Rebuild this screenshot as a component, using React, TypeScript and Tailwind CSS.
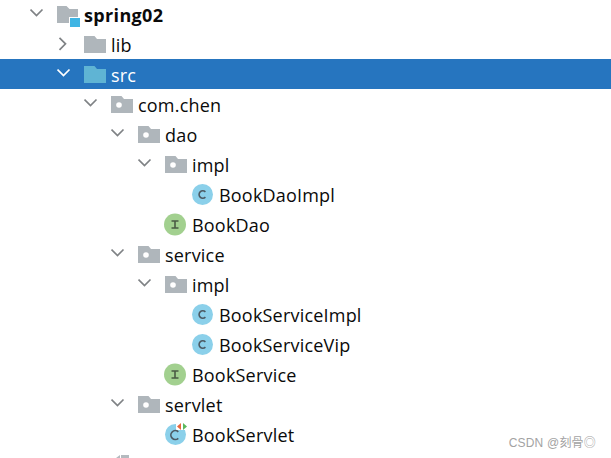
type Kind = "module" | "folder" | "source" | "package" | "class" | "iface" | "servlet";

type Row = { depth: number; label: string; kind: Kind; open?: boolean; selected?: boolean; bold?: boolean };

const rows: Row[] = [
  { depth: 0, label: "spring02", kind: "module", open: true, bold: true },
  { depth: 1, label: "lib", kind: "folder", open: false },
  { depth: 1, label: "src", kind: "source", open: true, selected: true },
  { depth: 2, label: "com.chen", kind: "package", open: true },
  { depth: 3, label: "dao", kind: "package", open: true },
  { depth: 4, label: "impl", kind: "package", open: true },
  { depth: 5, label: "BookDaoImpl", kind: "class" },
  { depth: 4, label: "BookDao", kind: "iface" },
  { depth: 3, label: "service", kind: "package", open: true },
  { depth: 4, label: "impl", kind: "package", open: true },
  { depth: 5, label: "BookServiceImpl", kind: "class" },
  { depth: 5, label: "BookServiceVip", kind: "class" },
  { depth: 4, label: "BookService", kind: "iface" },
  { depth: 3, label: "servlet", kind: "package", open: true },
  { depth: 4, label: "BookServlet", kind: "servlet" },
];

const indents = ["pl-[30px]", "pl-[57px]", "pl-[84px]", "pl-[111px]", "pl-[138px]", "pl-[165px]"];

const Chevron = ({ open, selected }: { open?: boolean; selected?: boolean }) => (
  <svg width="14" height="14" viewBox="0 0 14 14" fill="none" stroke={selected ? "#ffffff" : "#7f8285"} strokeWidth="1.7">
    {open ? <path d="M.5 2.500l6 6 6-6" /> : <path d="M2.500 .8l6 6-6 6" />}
  </svg>
);

const Folder = ({ color, dot }: { color: string; dot?: boolean }) => (
  <svg width="22" height="18" viewBox="0 0 22 18">
    <path d="M0 1h10.500l2.500 3h9v14H0z" fill={color} />
    {dot && <circle cx="8" cy="10" r="2.800" fill="#ffffff" />}
  </svg>
);

const Round = ({ color, letter }: { color: string; letter: string }) => (
  <svg width="22" height="24" viewBox="0 0 22 24" className="overflow-visible">
    {letter === "C" ? (
      <>
        <circle cx="10.500" cy="12.500" r="10.500" fill={color} />
        <path d="M13.400 9.900a3.700 3.700 0 1 0 0 5.200" fill="none" stroke="#4c5a63" strokeWidth="1.600" />
      </>
    ) : (
      <>
        <circle cx="10" cy="12.500" r="11" fill={color} />
        <path d="M6.500 9h7M6.500 16h7M10 9v7" fill="none" stroke="#4a5a44" strokeWidth="1.600" />
      </>
    )}
  </svg>
);

const ModuleIcon = () => (
  <svg width="23" height="28" viewBox="0 0 23 28">
    <path d="M0 6h9.500l3 3H21v14H0z" fill="#afb6bb" />
    <rect x="12" y="17" width="11" height="11" fill="#ffffff" />
    <rect x="13" y="18" width="10" height="9" fill="#3fb5e4" />
  </svg>
);

const ServletIcon = () => (
  <svg width="23" height="24" viewBox="0 0 23 24">
    <circle cx="10.500" cy="12.500" r="10.500" fill="#8bd0ea" />
    <path d="M11 0h12v8H11z" fill="#ffffff" />
    <path d="M13.300 9.900a4.400 4.400 0 1 0 0 6.400" fill="none" stroke="#4c5a63" strokeWidth="1.700" />
    <path d="M16 1v7l-4-3.500z" fill="#e8663c" />
    <path d="M18 1v7l4-3.500z" fill="#5cb85c" />
  </svg>
);

const Icon = ({ kind }: { kind: Kind }) => {
  if (kind === "module") return <ModuleIcon />;
  if (kind === "folder") return <Folder color="#afb6bb" />;
  if (kind === "source") return <Folder color="#5fb4d4" />;
  if (kind === "package") return <Folder color="#afb6bb" dot />;
  if (kind === "class") return <Round color="#8bd0ea" letter="C" />;
  if (kind === "iface") return <Round color="#a2d08f" letter="I" />;
  return <ServletIcon />;
};

const TreeRow = ({ row }: { row: Row }) => (
  <div className={`flex h-[30px] items-center ${indents[row.depth]} ${row.selected ? "bg-[#2675bf] text-white" : "text-[#0a0a0a]"}`}>
    <div className="flex w-[27px] shrink-0 items-center">
      {row.open !== undefined && <Chevron open={row.open} selected={row.selected} />}
    </div>
    <div className="flex w-[27px] shrink-0 items-center">
      <Icon kind={row.kind} />
    </div>
    <span className={`pt-[2px] ${row.bold ? "font-bold tracking-[0.35px]" : "tracking-[0.2px]"}`}>{row.label}</span>
  </div>
);

export default function App() {
  return (
    <div className="relative h-[458px] w-[611px] overflow-hidden bg-white font-['Open_Sans','Noto_Sans',sans-serif] text-[18px] leading-[30px]">
      <div className="-mt-px">
        {rows.map((row, i) => (
          <TreeRow key={i} row={row} />
        ))}
        {/* next row is cut off by the bottom of the window */}
        <div className="h-[30px] pl-[116px] pt-[6px]">
          <svg width="13" height="3" viewBox="0 0 13 3">
            <path d="M0 3l4-3v3zM5 0h8v3H5z" fill="#b4babf" />
          </svg>
        </div>
      </div>
      <span className="absolute right-[15px] top-[435px] font-['Liberation_Sans','Noto_Sans_CJK_SC',sans-serif] text-[12px] leading-[16px] tracking-[0.2px] text-[#a3a3a3]">
        CSDN @刻骨◎
      </span>
    </div>
  );
}
